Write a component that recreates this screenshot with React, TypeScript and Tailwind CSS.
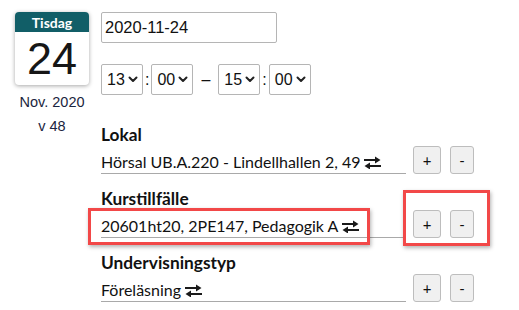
import React from 'react'

const lato = { fontFamily: 'Lato, "Noto Sans", sans-serif' }
const arial = { fontFamily: '"Liberation Sans", Arial, sans-serif' }

function Chevron() {
  return (
    <svg width="10" height="7" viewBox="0 0 10 7" className="ml-[3px]">
      <path d="M1.5 1.5 L5 5 L8.5 1.5" fill="none" stroke="#222" strokeWidth="2" strokeLinecap="round" strokeLinejoin="round" />
    </svg>
  )
}

function Swap() {
  return (
    <svg width="19" height="13" viewBox="0 0 19 13" className="ml-[3px] inline-block">
      <path d="M1 4 H15" stroke="#1a1a1a" strokeWidth="2" />
      <path d="M12 0.5 L17.5 4 L12 7.5 Z" fill="#1a1a1a" />
      <path d="M4 10 H18" stroke="#1a1a1a" strokeWidth="2" />
      <path d="M7 6.5 L1.5 10 L7 13.5 Z" fill="#1a1a1a" />
    </svg>
  )
}

function TimeSelect({ value }: { value: string }) {
  return (
    <div className="flex h-[31px] w-[42px] items-center rounded-[2px] border border-[#b5b5b5] bg-white pl-[5px] text-[16px] text-[#111]" style={arial}>
      {value}
      <Chevron />
    </div>
  )
}

function Section({ title, value, first }: { title: string; value: string; first?: boolean }) {
  return (
    <div className={first ? 'mt-[30px]' : 'mt-[15px]'}>
      <div className="text-[17.3px] font-bold leading-[20px] text-[#111]">{title}</div>
      <div className="flex h-[29px] items-end">
        <div className="flex w-[305px] items-center border-b border-[#a9a9a9] pb-[1px] text-[16px] leading-[20px] text-[#111]">
          {value}
          <Swap />
        </div>
        <button className="ml-[7px] flex h-[28px] w-[28px] items-center justify-center rounded-[3px] border border-[#bdbdbd] bg-[#f0f0f0] text-[15px] text-[#111]">+</button>
        <button className="ml-[9px] flex h-[28px] w-[24px] items-center justify-center rounded-[3px] border border-[#bdbdbd] bg-[#f0f0f0] text-[15px] text-[#111]">-</button>
      </div>
    </div>
  )
}

export default function App() {
  return (
    <div className="relative h-[310px] w-[519px] overflow-hidden bg-white" style={lato}>
      <div className="flex pl-[15px] pt-[12px]">
        <div className="flex w-[74px] flex-col items-center">
          <div className="h-[73px] w-[74px] overflow-hidden rounded-[4px] bg-white shadow-[0_1px_4px_rgba(0,0,0,0.35)]">
            <div className="flex h-[20px] items-center justify-center bg-[#115e67] text-[14px] font-bold text-white">Tisdag</div>
            <div className="flex h-[53px] items-center justify-center text-[45px] leading-none text-[#161616]" style={arial}>24</div>
          </div>
          <div className="mt-[7px] text-center text-[14.5px] leading-[21px] text-[#1b2540]" style={arial}>
            <div>Nov. 2020</div>
            <div className="mt-[3px]">v 48</div>
          </div>
        </div>
        <div className="ml-[12px] flex flex-col">
          <div className="flex h-[31px] w-[176px] items-center rounded-[2px] border border-[#b5b5b5] pl-[3px] text-[16.5px] text-[#111]" style={arial}>2020-11-24</div>
          <div className="mt-[21px] flex items-center text-[16px] text-[#111]" style={arial}>
            <TimeSelect value="13" />
            <span className="mx-[2px]">:</span>
            <TimeSelect value="00" />
            <span className="mx-[8px]">–</span>
            <TimeSelect value="15" />
            <span className="mx-[2px]">:</span>
            <TimeSelect value="00" />
          </div>
          <Section first title="Lokal" value="Hörsal UB.A.220 - Lindellhallen 2, 49" />
          <Section title="Kurstillfälle" value="20601ht20, 2PE147, Pedagogik A" />
          <Section title="Undervisningstyp" value="Föreläsning" />
        </div>
      </div>
      <div className="absolute left-[88px] top-[208px] h-[37px] w-[282px] border-[3px] border-[#f24848] shadow-[1px_2px_4px_rgba(0,0,0,0.3)]" />
      <div className="absolute left-[403px] top-[190px] h-[56px] w-[87px] border-[3px] border-[#f24848] shadow-[1px_2px_4px_rgba(0,0,0,0.3)]" />
    </div>
  )
}
